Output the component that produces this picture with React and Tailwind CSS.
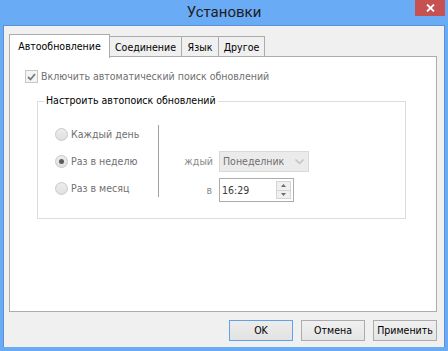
import React from 'react';

const Radio = ({ checked, label }) => (
  <div className="flex items-center h-[13px]">
    <span className="w-[13px] h-[13px] rounded-full border border-[#c9c9c9] bg-gradient-to-b from-[#ececec] to-[#e0e0e0] flex items-center justify-center">
      {checked && <span className="w-[5px] h-[5px] rounded-full bg-[#5c5c5c]" />}
    </span>
    <span className="ml-[3px] text-[#707070]">{label}</span>
  </div>
);

const Tab = ({ label, active, w }) =>
  active ? (
    <div className={`${w} h-[24px] bg-white border border-b-0 border-[#acacac] flex items-center justify-center text-black relative z-10 -mb-px pb-px`}>
      {label}
    </div>
  ) : (
    <div className={`${w} h-[21px] bg-[#f0f0f0] border border-b-0 border-l-0 border-[#acacac] flex items-center justify-center text-black`}>
      {label}
    </div>
  );

const Button = ({ children, primary }) => (
  <button
    className={
      primary
        ? 'w-[64px] h-[21px] border border-[#5ea3ea] bg-gradient-to-b from-[#ececec] to-[#e3e3e3] text-black'
        : 'w-[64px] h-[21px] border border-[#acacac] bg-gradient-to-b from-[#f0f0f0] to-[#e5e5e5] text-black'
    }
  >
    {children}
  </button>
);

export default function App() {
  return (
    <div
      className="w-[448px] h-[351px] bg-[#6aabf5] flex flex-col text-[10.5px] leading-none"
      style={{ fontFamily: '"DejaVu Sans Condensed", "DejaVu Sans", sans-serif' }}
    >
      <div className="h-[25px] relative flex items-center justify-center">
        <span className="text-[15px] text-[#1e1e1e] -mt-[1px]" style={{ fontFamily: 'Roboto, sans-serif' }}>
          Установки
        </span>
        <button className="absolute right-[3px] top-0 w-[30px] h-[16px] bg-[#c75050] flex items-center justify-center">
          <svg width="9" height="8" viewBox="0 0 9 8">
            <path d="M1 0.5 L8 7.5 M8 0.5 L1 7.5" stroke="white" strokeWidth="1.8" />
          </svg>
        </button>
      </div>
      <div className="flex-1 mx-[3px] mb-[4px] bg-[#f0f0f0] border border-[#5a91d4] border-b-0 flex flex-col pl-[5px] pt-[7px]">
        <div className="flex items-end h-[24px]">
          <Tab label="Автообновление" w="w-[101px]" active />
          <Tab label="Соединение" w="w-[72px]" />
          <Tab label="Язык" w="w-[37px]" />
          <Tab label="Другое" w="w-[46px]" />
        </div>
        <div className="w-[428px] h-[256px] bg-white border border-[#acacac] -mt-px relative pl-[15px] pt-[13px]">
          <div className="flex items-center h-[13px]">
            <span className="w-[13px] h-[13px] border border-[#c6c6c6] bg-[#f4f4f4] flex items-center justify-center">
              <svg width="9" height="8" viewBox="0 0 9 8">
                <path d="M1 4 L3.5 6.5 L8 1" stroke="#7a7a7a" strokeWidth="1.8" fill="none" />
              </svg>
            </span>
            <span className="ml-[3px] text-[#707070]">Включить автоматический поиск обновлений</span>
          </div>
          <div className="mt-[18px] ml-[12px] w-[369px] h-[118px] border border-[#dcdcdc] relative flex pt-[23px]">
            <span className="absolute -top-[7px] left-[6px] bg-white px-[2px] text-black">
              Настроить автопоиск обновлений
            </span>
            <div className="flex flex-col gap-[14px] pl-[17px] w-[120px] pt-[3px]">
              <Radio label="Каждый день" />
              <Radio label="Раз в неделю" checked />
              <Radio label="Раз в месяц" />
            </div>
            <div className="w-px h-[72px] bg-[#a0a0a0]" />
            <div className="flex flex-col gap-[6px] pt-[26px]">
              <div className="flex items-center">
                <span className="w-[60px] text-right pr-[6px] text-[#8a8a8a]">ждый</span>
                <div className="w-[90px] h-[21px] bg-[#ebebeb] border border-[#d9d9d9] flex items-center justify-between pl-[3px] pr-[4px] text-[#707070]">
                  <span>Понеделник</span>
                  <svg width="9" height="6" viewBox="0 0 9 6">
                    <path d="M0.5 0.5 L4.5 4.5 L8.5 0.5" stroke="#c3c3c3" strokeWidth="1.5" fill="none" />
                  </svg>
                </div>
              </div>
              <div className="flex items-center">
                <span className="w-[60px] text-right pr-[7px] text-[#8a8a8a]">в</span>
                <div className="w-[75px] h-[24px] bg-white border border-[#acacac] flex items-center justify-between pl-[2px] pr-[2px] text-[#3a3a3a]">
                  <span>16:29</span>
                  <div className="w-[15px] h-[18px] border border-[#d4d4d4] bg-[#f0f0f0] flex flex-col">
                    <div className="flex-1 flex items-center justify-center border-b border-[#d4d4d4]">
                      <svg width="5" height="3" viewBox="0 0 5 3"><path d="M0 3 L2.5 0 L5 3Z" fill="#6d6d6d" /></svg>
                    </div>
                    <div className="flex-1 flex items-center justify-center">
                      <svg width="5" height="3" viewBox="0 0 5 3"><path d="M0 0 L2.5 3 L5 0Z" fill="#6d6d6d" /></svg>
                    </div>
                  </div>
                </div>
              </div>
            </div>
          </div>
        </div>
        <div className="flex justify-end gap-[8px] pr-[7px] mt-[8px]">
          <Button primary>OK</Button>
          <Button>Отмена</Button>
          <Button>Применить</Button>
        </div>
      </div>
    </div>
  );
}
